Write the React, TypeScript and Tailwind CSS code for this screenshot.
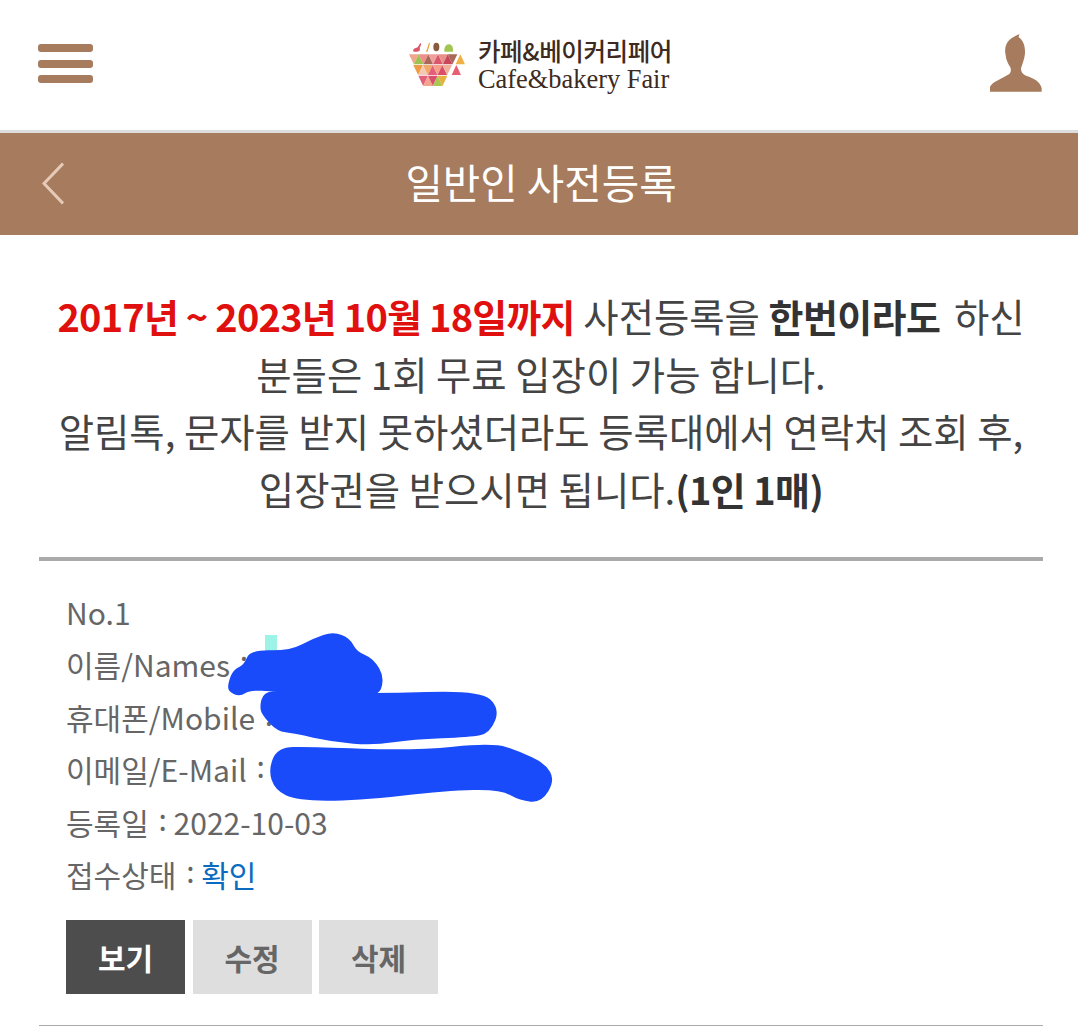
const KR = "font-['Noto_Sans_CJK_KR','Noto_Sans',sans-serif]";

function blob(pts: number[][]) {
  let d = "";
  const n = pts.length;
  for (let i = 0; i < n; i++) {
    const p = pts[i];
    const q = pts[(i + 1) % n];
    const mx = (p[0] + q[0]) / 2;
    const my = (p[1] + q[1]) / 2;
    d += i === 0 ? `M${(pts[n - 1][0] + p[0]) / 2} ${(pts[n - 1][1] + p[1]) / 2} Q${p[0]} ${p[1]} ${mx} ${my} ` : `Q${p[0]} ${p[1]} ${mx} ${my} `;
  }
  return d + "Z";
}

const BLOBS = [
  [[84,190],[100,148],[132,135],[150,90],[270,92],[340,55],[400,35],[450,55],[470,95],[520,115],[555,175],[530,240],[220,215],[150,210],[120,230],[85,215]],
  [[178,265],[190,215],[250,212],[520,222],[840,210],[900,265],[870,340],[810,352],[640,358],[520,376],[400,366],[280,340],[232,334],[192,292]],
  [[205,450],[232,382],[330,380],[640,392],[880,368],[960,395],[1035,430],[1065,480],[1025,548],[960,542],[900,508],[740,512],[470,542],[290,542],[225,510]],
];

function Logo() {
  const rows: { y: number; x: number; h: number; colors: string[] }[] = [
    { y: 105, x: 90, h: 30, colors: ["#f2a58e", "#9cc24f", "#ef8f8a", "#a9685a", "#f0a09a", "#d9566b", "#e8918a", "#c9465a", "#a9685a"] },
    { y: 137, x: 103, h: 30, colors: ["#ef9a45", "#f6c9b4", "#f0a96a", "#e4607a", "#f4a08a", "#d94f6a", "#f0b09a"] },
    { y: 169, x: 118, h: 31, colors: ["#e2607a", "#f2a58e", "#d9506c", "#a9c84f", "#e8b040"] },
  ];
  const w = 29;
  return (
    <svg width="58" height="50" viewBox="88 62 172 150" className="mt-[2px] shrink-0">
      <path d="M102 95c2-9 10-9 14-11l8-13 3 3-5 12c3 6-1 11-7 11s-12 1-13-2z" fill="#d9566b" />
      <path d="M141 97l5-14 4-13 3 1-3 13-5 14z" fill="#e8a832" />
      <ellipse cx="172" cy="83" rx="9" ry="13" fill="#8a5a3c" />
      <path d="M196 97v-9c2-9 8-13 14-13s11 5 12 13v9z" fill="#a3c653" />
      {rows.map((r) =>
        r.colors.map((c, i) => {
          const x = r.x + (i * w) / 2;
          const up = i % 2 === 1;
          const pts = up
            ? `${x},${r.y + r.h} ${x + w},${r.y + r.h} ${x + w / 2},${r.y}`
            : `${x},${r.y} ${x + w},${r.y} ${x + w / 2},${r.y + r.h}`;
          return <polygon key={`${r.y}-${i}`} points={pts} fill={c} />;
        })
      )}
      <polygon points="230,135 258,135 244,105" fill="#f0b044" />
      <polygon points="218,167 246,167 232,137" fill="#e85f72" />
    </svg>
  );
}

function Colon() {
  return <span className="relative top-[-4px] ml-[3px]">:</span>;
}

export default function App() {
  return (
    <div className={`relative h-[1026px] w-[1078px] overflow-hidden bg-white ${KR}`}>
      <header className="flex h-[133px] items-center justify-between border-b-[3px] border-[#ddd] pl-[38px] pr-[35px] pb-[4px]">
        <svg width="55" height="39" viewBox="0 0 55 39" className="shrink-0">
          <rect x="0" y="0" width="55" height="8" rx="3" fill="#a67b5e" />
          <rect x="0" y="16" width="55" height="8" rx="3" fill="#a67b5e" />
          <rect x="0" y="31" width="55" height="8" rx="3" fill="#a67b5e" />
        </svg>
        <div className="flex items-center gap-[12px] pr-[2px] pt-[2px]">
          <Logo />
          <div className="flex flex-col text-[#3d2a20]">
            <span className="text-[24.5px] leading-[30px] font-medium tracking-[-0.4px]">카페&amp;베이커리페어</span>
            <span className="font-['Liberation_Serif',serif] text-[26.4px] leading-[26px]">Cafe&amp;bakery Fair</span>
          </div>
        </div>
        <svg width="54" height="58" viewBox="90 42 160 174" className="shrink-0">
          <path
            d="M92 215V200C100 185 125 178 150 162C156 155 155 148 153 142C146 130 140 120 139 105C135 90 138 72 150 60C160 52 170 45 181 43C178 48 178 50 178 52C190 60 198 75 197 100C196 115 190 130 185 145C184 155 190 163 200 167C225 175 243 185 247 205V215Z"
            fill="#a67b5e"
          />
        </svg>
      </header>

      <div className="relative flex h-[102px] items-center justify-center bg-[#a67b5e] pb-[4px] pl-[4px]">
        <svg width="22" height="44" viewBox="0 0 22 44" className="absolute left-[42px] top-[29px]">
          <path d="M21 1.5 2 21.5l19 20" fill="none" stroke="#e6cab8" strokeWidth="3" />
        </svg>
        <h1 className="text-[40.7px] leading-none font-normal text-white">일반인 사전등록</h1>
      </div>

      <main className="pl-[39px] pr-[35px] pt-[52px]">
        <div className="text-center text-[38.4px] leading-[57.5px] whitespace-nowrap text-[#444]">
          <p>
            <b className="text-[38px] font-bold tracking-[-0.8px] text-[#e0100f]">2017년 ~ 2023년 10월 18일까지</b> 사전등록을 <b className="mr-[5px] text-[38px] font-bold tracking-[-0.6px] text-[#333]">한번이라도</b> 하신
            <br />
            분들은 1회 무료 입장이 가능 합니다.
            <br />
            알림톡, 문자를 받지 못하셨더라도 등록대에서 연락처 조회 후,
            <br />
            입장권을 받으시면 됩니다.<b className="text-[38px] font-bold tracking-[-0.6px] text-[#333]">(1인 1매)</b>
          </p>
        </div>

        <div className="mt-[40px] border-t-[4px] border-[#aaa] px-[27px] pt-[25px]">
          <ul className="text-[30px] leading-[52.4px] text-[#666]">
            <li>No.1</li>
            <li>이름/Names <Colon /></li>
            <li>휴대폰/Mobile <Colon /></li>
            <li>이메일/E-Mail <Colon /></li>
            <li>등록일 <Colon /> 2022-10-03</li>
            <li>
              접수상태 <Colon /> <span className="text-[#0a6bc0]">확인</span>
            </li>
          </ul>
          <div className="mt-[20px] flex gap-[7.5px]">
            <button className="h-[74px] w-[119px] bg-[#4d4d4d] text-[30px] font-bold text-white">보기</button>
            <button className="h-[74px] w-[119px] bg-[#dedede] text-[30px] font-bold text-[#666]">수정</button>
            <button className="h-[74px] w-[119px] bg-[#dedede] text-[30px] font-bold text-[#666]">삭제</button>
          </div>
        </div>
        <div className="mt-[31px] border-t-[2px] border-[#aaa]" />
      </main>

      <div className="absolute left-[265px] top-[635px] h-[20px] w-[12px] bg-[#9df3e6]" />
      <svg width="370" height="190" viewBox="0 0 1110 570" className="absolute left-[200px] top-[620px]">
        {BLOBS.map((b, i) => (
          <path key={i} d={blob(b)} fill="#1a4bfa" />
        ))}
      </svg>
    </div>
  );
}
